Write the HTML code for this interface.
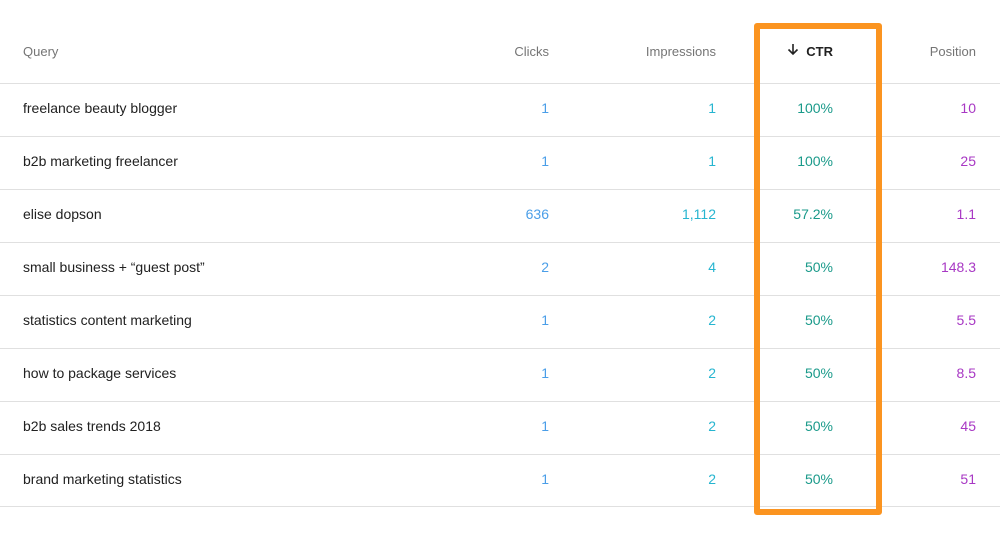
<!DOCTYPE html>
<html><head><style>
body{margin:0;width:1000px;height:538px;background:#fff;font-family:"Liberation Sans",Arial,sans-serif;position:relative;overflow:hidden}
.t{position:absolute;font-size:14px;line-height:16px;white-space:nowrap}
.h{color:#757575;font-size:13px}
.line{position:absolute;left:0;width:1000px;height:1px;background:#e0e0e0}
.q{left:23px;color:#212121}
.c{right:451px;text-align:right;color:#4a9ee8}
.i{right:284px;text-align:right;color:#26b5d0}
.r{right:167px;text-align:right;color:#1a9a8a}
.p{right:24px;text-align:right;color:#a838c4}
.box{position:absolute;left:754px;top:23px;width:116px;height:480px;border:6px solid #fb9420;border-radius:3px}
</style></head><body>
<div class="t h q" style="top:44px;color:#757575">Query</div>
<div class="t h c" style="top:44px;color:#757575">Clicks</div>
<div class="t h i" style="top:44px;color:#757575">Impressions</div>
<div class="t h r" style="top:44px;color:#212121;font-weight:bold">CTR</div>
<svg style="position:absolute;left:786px;top:42px" width="14" height="14" viewBox="0 0 14 14"><path d="M7 2v10M2.5 7.5L7 12l4.5-4.5" fill="none" stroke="#222" stroke-width="1.6"/></svg>
<div class="t h p" style="top:44px;color:#757575">Position</div>
<div class="line" style="top:83px"></div>
<div class="line" style="top:136px"></div>
<div class="line" style="top:189px"></div>
<div class="line" style="top:242px"></div>
<div class="line" style="top:295px"></div>
<div class="line" style="top:348px"></div>
<div class="line" style="top:401px"></div>
<div class="line" style="top:454px"></div>
<div class="line" style="top:506px"></div>

<div class="t q" style="top:100px">freelance beauty blogger</div><div class="t c" style="top:100px">1</div><div class="t i" style="top:100px">1</div><div class="t r" style="top:100px">100%</div><div class="t p" style="top:100px">10</div>
<div class="t q" style="top:153px">b2b marketing freelancer</div><div class="t c" style="top:153px">1</div><div class="t i" style="top:153px">1</div><div class="t r" style="top:153px">100%</div><div class="t p" style="top:153px">25</div>
<div class="t q" style="top:206px">elise dopson</div><div class="t c" style="top:206px">636</div><div class="t i" style="top:206px">1,112</div><div class="t r" style="top:206px">57.2%</div><div class="t p" style="top:206px">1.1</div>
<div class="t q" style="top:259px">small business + “guest post”</div><div class="t c" style="top:259px">2</div><div class="t i" style="top:259px">4</div><div class="t r" style="top:259px">50%</div><div class="t p" style="top:259px">148.3</div>
<div class="t q" style="top:312px">statistics content marketing</div><div class="t c" style="top:312px">1</div><div class="t i" style="top:312px">2</div><div class="t r" style="top:312px">50%</div><div class="t p" style="top:312px">5.5</div>
<div class="t q" style="top:365px">how to package services</div><div class="t c" style="top:365px">1</div><div class="t i" style="top:365px">2</div><div class="t r" style="top:365px">50%</div><div class="t p" style="top:365px">8.5</div>
<div class="t q" style="top:418px">b2b sales trends 2018</div><div class="t c" style="top:418px">1</div><div class="t i" style="top:418px">2</div><div class="t r" style="top:418px">50%</div><div class="t p" style="top:418px">45</div>
<div class="t q" style="top:471px">brand marketing statistics</div><div class="t c" style="top:471px">1</div><div class="t i" style="top:471px">2</div><div class="t r" style="top:471px">50%</div><div class="t p" style="top:471px">51</div>
<div class="box"></div>
</body></html>
